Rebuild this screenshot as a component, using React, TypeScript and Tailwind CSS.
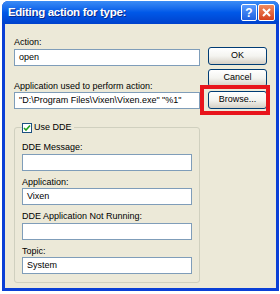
import React from "react";

const font = { fontFamily: '"Liberation Sans", Arial, sans-serif' };

function Field({ value }: { value?: string }) {
  return (
    <div className="h-[17px] border border-[#7f9db9] bg-white pl-[4px] text-[9px] leading-[15px] text-black whitespace-nowrap overflow-hidden">
      {value}
    </div>
  );
}

function Label({ children }: { children: React.ReactNode }) {
  return <div className="h-[11px] text-[9px] leading-[11px] text-black whitespace-nowrap">{children}</div>;
}

function XpButton({ children }: { children: React.ReactNode }) {
  return (
    <div className="h-[18px] w-[59px] rounded-[3px] border border-[#003c74] bg-gradient-to-b from-[#ffffff] via-[#f4f4f0] to-[#d6d0c5] flex items-center justify-center text-[9px] text-black">
      {children}
    </div>
  );
}

export default function App() {
  return (
    <div className="w-[280px] h-[294px] bg-white overflow-hidden" style={font}>
      <div className="ml-[2px] mt-[1px] w-[277px] h-[290px] flex flex-col rounded-t-[6px] overflow-hidden bg-[#0a3fd6]">
        {/* Title bar */}
        <div className="h-[23px] shrink-0 flex items-center pl-[6px] pr-[4px] bg-gradient-to-b from-[#3b8cf5] via-[#0058e8] to-[#0041cc]">
          <div className="flex-1 text-white font-bold text-[11.5px] tracking-[-0.3px] whitespace-nowrap [text-shadow:1px_1px_0_#0a2a8a]">
            Editing action for type:
          </div>
          <div className="flex gap-[1px]">
            <div className="w-[16px] h-[17px] rounded-[2px] border border-white bg-gradient-to-b from-[#5a9cff] to-[#1f5fe0] flex items-center justify-center text-white font-bold text-[12px] leading-none">
              ?
            </div>
            <div className="w-[17px] h-[17px] rounded-[2px] border border-white bg-gradient-to-b from-[#f08a5e] to-[#d5401c] flex items-center justify-center">
              <svg width="9" height="9" viewBox="0 0 9 9">
                <path d="M1 1 L8 8 M8 1 L1 8" stroke="white" strokeWidth="2" />
              </svg>
            </div>
          </div>
        </div>
        {/* Body */}
        <div className="flex-1 mx-[3px] mb-[3px] bg-[#ece9d8] flex pl-[9px] pt-[13px] relative">
          <div className="w-[186px] flex flex-col">
            <Label>Action:</Label>
            <div className="mt-[1px]">
              <Field value="open" />
            </div>
            <div className="mt-[15px]">
              <Label>Application used to perform action:</Label>
            </div>
            <div className="mt-[0px]">
              <Field value={'"D:\\Program Files\\Vixen\\Vixen.exe" "%1"'} />
            </div>
            {/* Group box */}
            <div className="mt-[18px] h-[156px] border border-[#d0d0bf] rounded-[3px] px-[7px] flex flex-col">
              <div className="-mt-[6px] flex items-center gap-[2px] self-start bg-[#ece9d8] pr-[2px]">
                <div className="w-[10px] h-[10px] border border-[#1c5180] bg-white flex items-center justify-center">
                  <svg width="8" height="8" viewBox="0 0 8 8">
                    <path d="M1 4 L3 6 L7 1.5" stroke="#21a121" strokeWidth="1.6" fill="none" />
                  </svg>
                </div>
                <span className="text-[9px] leading-[11px] text-black">Use DDE</span>
              </div>
              <div className="mt-[9px]">
                <Label>DDE Message:</Label>
              </div>
              <div className="mt-[1px]">
                <Field />
              </div>
              <div className="mt-[6px]">
                <Label>Application:</Label>
              </div>
              <Field value="Vixen" />
              <div className="mt-[6px]">
                <Label>DDE Application Not Running:</Label>
              </div>
              <div className="mt-[1px]">
                <Field />
              </div>
              <div className="mt-[6px]">
                <Label>Topic:</Label>
              </div>
              <Field value="System" />
            </div>
          </div>
          <div className="ml-[8px] mt-[10px] flex flex-col gap-[4px]">
            <XpButton>OK</XpButton>
            <XpButton>Cancel</XpButton>
            <XpButton>Browse...</XpButton>
          </div>
          <div className="absolute left-[195px] top-[61px] w-[70px] h-[30px] border-[4px] border-[#e8141b]" />
        </div>
      </div>
    </div>
  );
}
